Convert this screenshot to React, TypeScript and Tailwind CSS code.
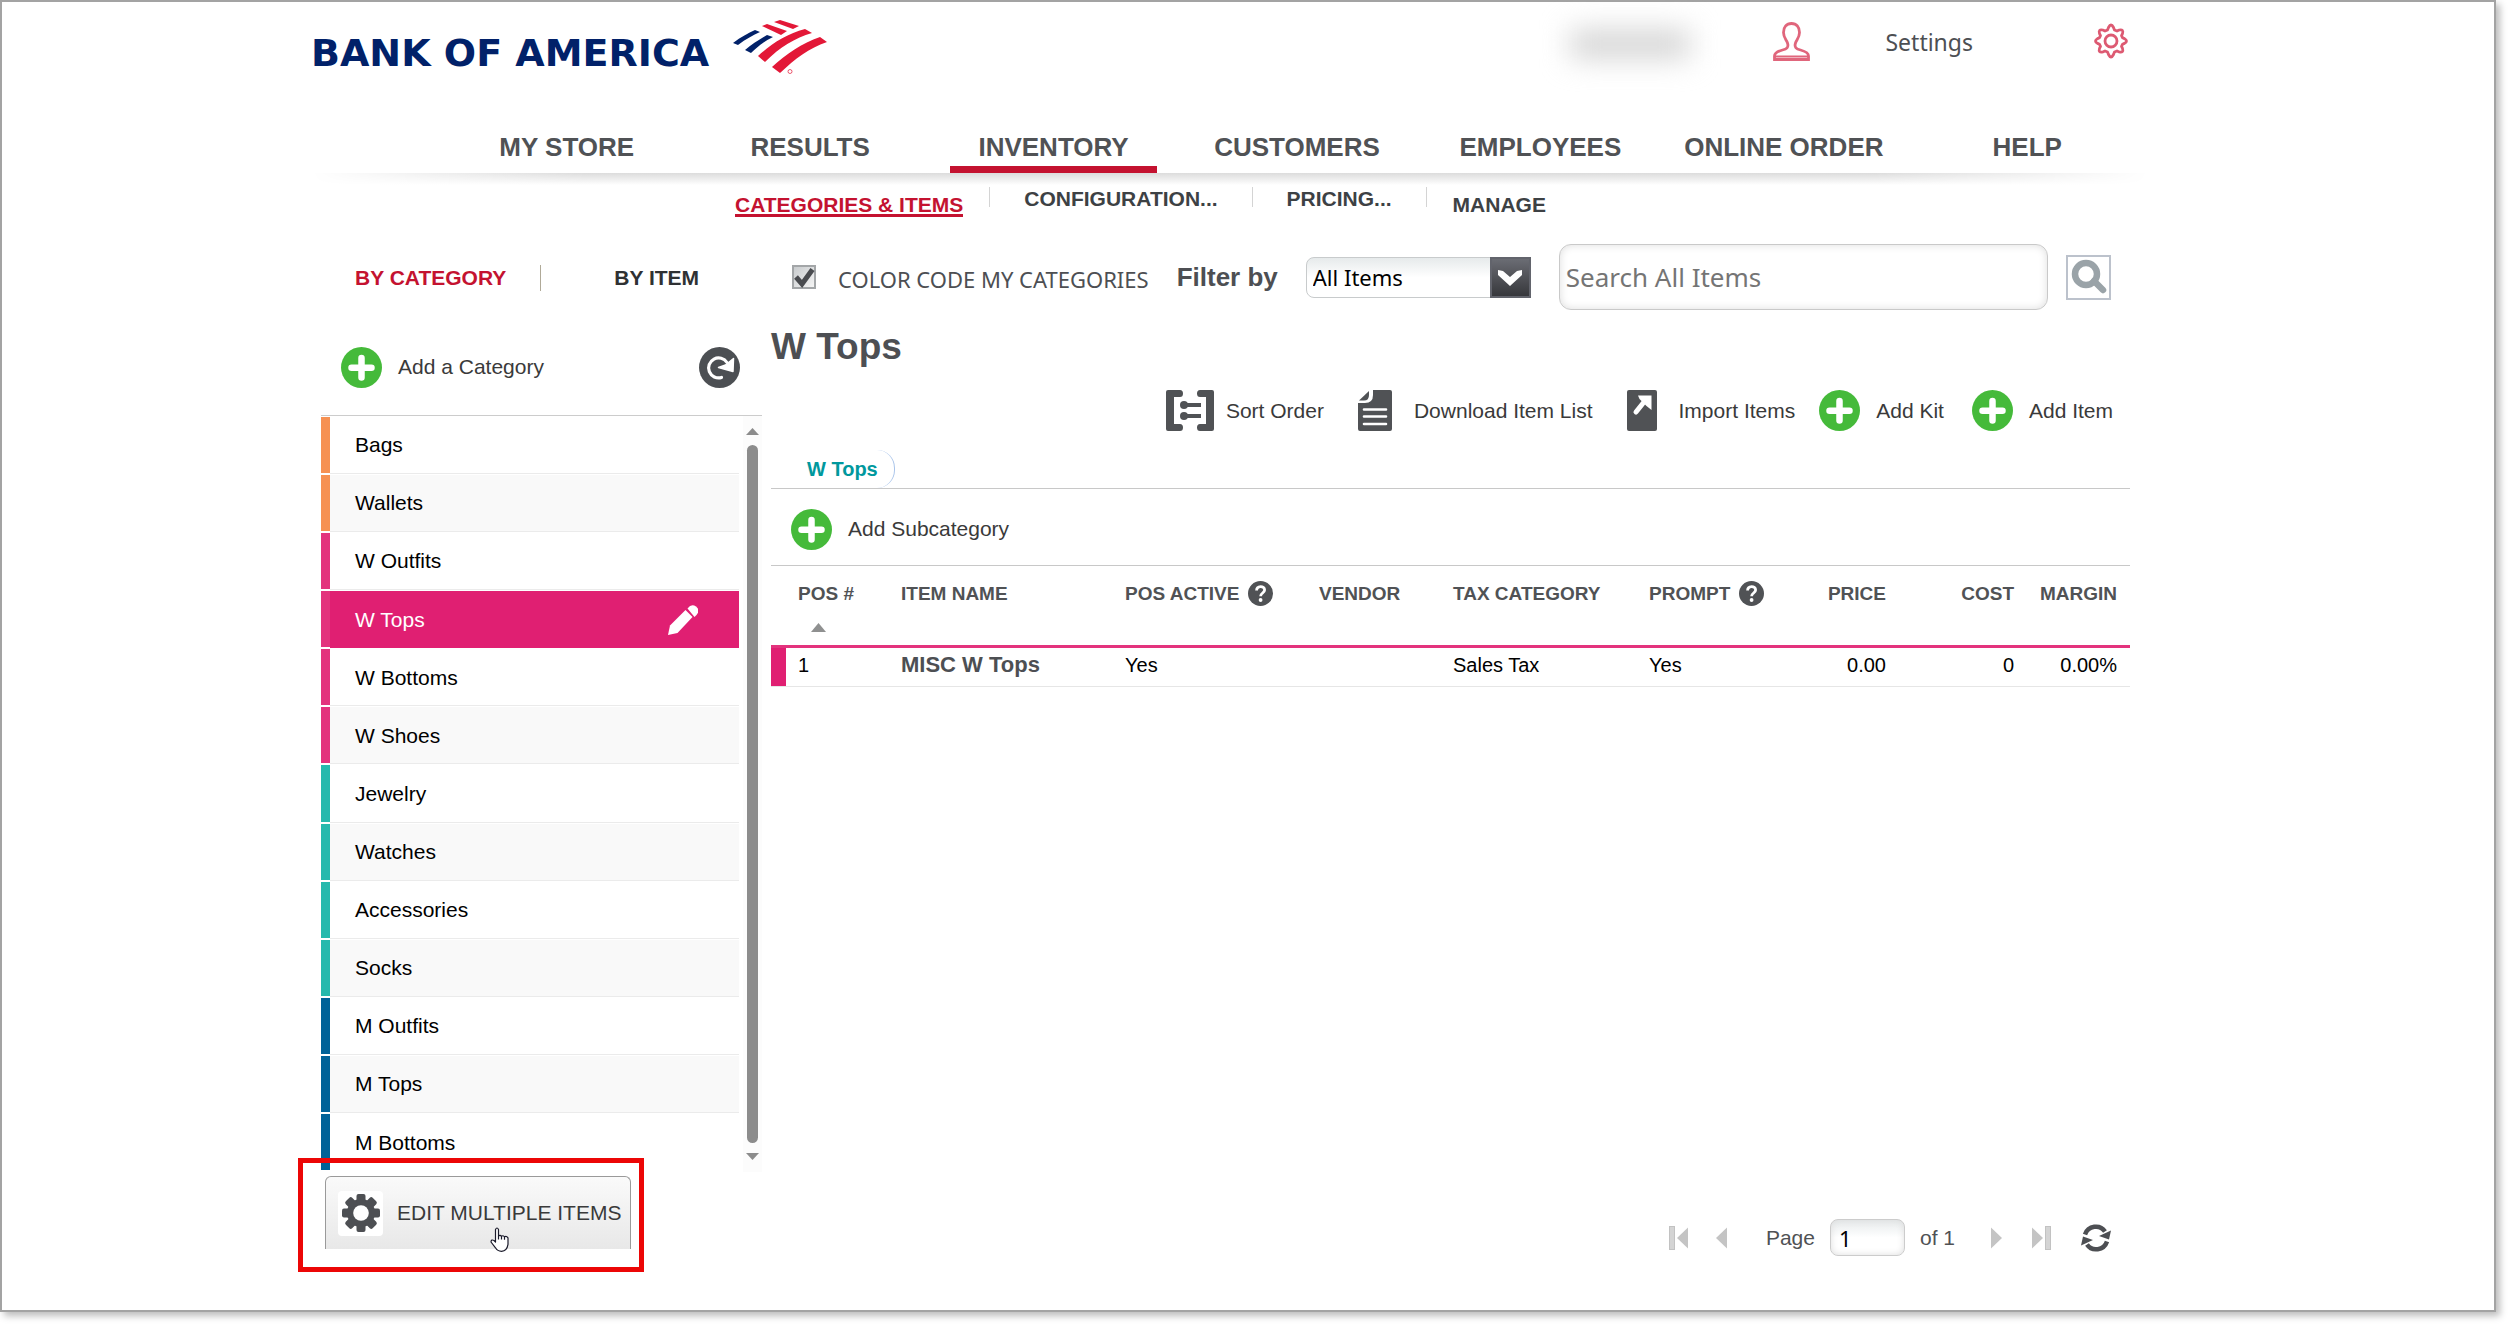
import React, { useState } from 'react';

interface Category {
    name: string;
    bar: string;
}

const categories: Category[] = [
    { name: 'Bags', bar: 'bg-[#f69153]' },
    { name: 'Wallets', bar: 'bg-[#f69153]' },
    { name: 'W Outfits', bar: 'bg-[#e3337d]' },
    { name: 'W Tops', bar: 'bg-[#e3337d]' },
    { name: 'W Bottoms', bar: 'bg-[#e3337d]' },
    { name: 'W Shoes', bar: 'bg-[#e3337d]' },
    { name: 'Jewelry', bar: 'bg-[#26b9ad]' },
    { name: 'Watches', bar: 'bg-[#26b9ad]' },
    { name: 'Accessories', bar: 'bg-[#26b9ad]' },
    { name: 'Socks', bar: 'bg-[#26b9ad]' },
    { name: 'M Outfits', bar: 'bg-[#006298]' },
    { name: 'M Tops', bar: 'bg-[#006298]' },
    { name: 'M Bottoms', bar: 'bg-[#006298]' },
];

const navItems = ['MY STORE', 'RESULTS', 'INVENTORY', 'CUSTOMERS', 'EMPLOYEES', 'ONLINE ORDER', 'HELP'];

const PlusIcon = () => (
    <svg className="w-[41px] h-[41px] shrink-0" viewBox="0 0 41 41">
        <circle cx="20.5" cy="20.5" r="20.5" fill="#45ba3a" />
        <path d="M20.5 11v19.5M10.5 20.7h20" stroke="#fff" strokeWidth="6.5" strokeLinecap="round" />
    </svg>
);

const HelpIcon = () => (
    <svg className="w-[25px] h-[25px] shrink-0" viewBox="0 0 25 25">
        <circle cx="12.5" cy="12.5" r="12.5" fill="#505255" />
        <path d="M8.6 9.6c0-5.4 8-5.2 8-.6 0 3-4 3-4 6.200" fill="none" stroke="#fff" strokeWidth="2.800" />
        <circle cx="12.600" cy="19" r="1.900" fill="#fff" />
    </svg>
);

const LogoMark = () => (
    <svg className="w-[94px] h-[54px]" viewBox="0 0 94 54">
        <g fill="#012169">
            <path d="M0 23C8 17 15 13 22 10l5 2C20 15 13 19 5 25z" />
            <path d="M12 30c7-6 15-11 22-15l6 2c-8 4-15 9-22 16z" />
        </g>
        <g fill="#e31837">
            <path d="M25 36C39 23 54 14 72 9l7 4C62 18 47 27 32 42z" />
            <path d="M39 47C53 34 69 23 87 17l7 5C76 28 62 39 47 53z" />
            <path d="M29 6l5-2 20 7-6 4z" />
            <path d="M41 2l6-2 19 6-6 3z" />
        </g>
        <circle cx="57" cy="51.500" r="2" fill="none" stroke="#e31837" strokeWidth=".7" />
    </svg>
);

const UserIcon = () => (
    <svg className="w-[37px] h-[39px]" viewBox="0 0 37 39" fill="none" stroke="#e0667c" strokeWidth="2.800">
        <path d="M18.500 1.500c-5 0-8 3.500-8 9 0 5 3 7.500 4 10.500 1.500 4.500-1 6-5 7C4 29.500 1.500 31 1.500 34v3.500h34V34c0-3-2.500-4.500-8-6-4-1-6.500-2.500-5-7 1-3 4-5.500 4-10.500 0-5.500-3-9-8-9z" />
        <path d="M2 34.500h33" strokeWidth="2" />
    </svg>
);

const GearOutline = () => (
    <svg className="w-[36px] h-[36px]" viewBox="0 0 36 36" fill="none" stroke="#dd5a72" strokeWidth="2.800" strokeLinejoin="round">
        <path d="M15.500 4.500q2.500-5 5 0l1 2.500 2.500 1 2.200-1q4.700-1 3.300 3.700l-1 2 1 2 2 .9q4 2.400 0 4.800l-2 .9-1 2 1 2q1.400 4.700-3.300 3.700l-2.200-1-2.500 1-1 2.500q-2.500 5-5 0l-1-2.500-2.500-1-2.200 1q-4.700 1-3.300-3.700l1-2-1-2-2-.9q-4-2.400 0-4.800l2-.9 1-2-1-2q-1.400-4.700 3.300-3.700l2.200 1 2.500-1z" />
        <circle cx="18" cy="18" r="6" />
    </svg>
);

const GearSolid = () => (
    <svg className="w-[38px] h-[38px]" viewBox="0 0 38 38">
        <g fill="#4d4f53">
            <circle cx="19" cy="19" r="14" />
            <rect x="14.500" y="0" width="9" height="38" rx="2" />
            <rect x="14.500" y="0" width="9" height="38" rx="2" transform="rotate(45 19 19)" />
            <rect x="14.500" y="0" width="9" height="38" rx="2" transform="rotate(90 19 19)" />
            <rect x="14.500" y="0" width="9" height="38" rx="2" transform="rotate(135 19 19)" />
        </g>
        <circle cx="19" cy="19" r="7.800" fill="#fff" />
    </svg>
);

const RefreshDot = () => (
    <svg className="w-[41px] h-[41px]" viewBox="0 0 41 41">
        <circle cx="20.500" cy="20.500" r="20.500" fill="#4c4f53" />
        <path d="M22.500 30.500a10 10 0 1 1 5.500-15" fill="none" stroke="#fff" strokeWidth="3.200" strokeLinecap="round" />
        <path d="M34.500 11.500l-.5 13-14.500-4 7-2.500z" fill="#fff" stroke="#fff" strokeWidth="1.500" strokeLinejoin="round" />
    </svg>
);

const SortIcon = () => (
    <svg className="w-[48px] h-[41px]" viewBox="0 0 48 41">
        <path d="M2 0h12q3 0 3 3.500T14 7H8v27h6q3 0 3 3.500T14 41H2q-2 0-2-2V2q0-2 2-2zM46 0H34q-3 0-3 3.500T34 7h6v27h-6q-3 0-3 3.500t3 3.500h12q2 0 2-2V2q0-2-2-2z" fill="#505255" />
        <path d="M17 15h18M17 26h18" stroke="#505255" strokeWidth="4" />
        <circle cx="18" cy="15" r="4" fill="#505255" />
        <circle cx="18" cy="26" r="4" fill="#505255" />
    </svg>
);

const DocIcon = () => (
    <svg className="w-[34px] h-[41px]" viewBox="0 0 34 41">
        <path d="M15 0h17q2 0 2 2v37q0 2-2 2H2q-2 0-2-2V13h7q8 0 8-8z" fill="#505255" />
        <path d="M1 10.500L11 1v4q0 5.500-5 5.500z" fill="#505255" />
        <path d="M6 19.500h22M6 26.500h22M6 34h22" stroke="#fff" strokeWidth="2.600" strokeLinecap="round" />
    </svg>
);

const ImportIcon = () => (
    <svg className="w-[30px] h-[41px]" viewBox="0 0 30 41">
        <rect width="30" height="41" rx="2" fill="#505255" />
        <path d="M9 22l8-10" stroke="#fff" strokeWidth="5" strokeLinecap="round" />
        <path d="M11 5.500h13.500V20l-5-4-7-7z" fill="#fff" />
    </svg>
);

const PencilIcon = () => (
    <svg className="w-[30px] h-[30px]" viewBox="0 0 30 30" fill="#fff">
        <path d="M0 30l2-9.500L17.500 5l7 7L9.500 28z" />
        <path d="M19.500 3.500q4-5.500 8.500-2t.5 8.500l-2 2z" />
    </svg>
);

const SearchIcon = () => (
    <svg className="w-[36px] h-[36px]" viewBox="0 0 36 36" fill="none" stroke="#9aa3a8">
        <circle cx="15" cy="15" r="11" strokeWidth="6.500" />
        <path d="M23 22l9 9" strokeWidth="6.500" strokeLinecap="round" />
    </svg>
);

const ReloadIcon = () => (
    <svg className="w-[30px] h-[28px]" viewBox="0 0 30 28">
        <path d="M4 10.500C7 1.500 19 0 24 7.500M26 17.500C23 26.500 11 28 6 20.500" fill="none" stroke="#4d4f53" strokeWidth="4.500" />
        <path d="M30 6.500l-2 9-10-3.500zM0 21.500l2-9 10 3.500z" fill="#4d4f53" />
    </svg>
);

const ArrowIcon = ({ bar, flip }: { bar?: boolean; flip?: boolean }) => (
    <svg className={`h-[24px] ${bar ? 'w-[20px]' : 'w-[12px]'} ${flip ? 'rotate-180' : ''}`} viewBox={bar ? '0 0 20 24' : '8 0 12 24'}>
        <path d="M19 1.500v21L8 12z" fill="#c4c4c4" />
        {bar && <rect x=".5" y=".5" width="5" height="23" fill="#d4d4d4" stroke="#c2c2c2" />}
    </svg>
);

const HandCursor = () => (
    <svg className="w-[19px] h-[25px]" viewBox="0 0 19 25" fill="#fff" stroke="#1a1a2a" strokeWidth="1.200" strokeLinejoin="round">
        <path d="M5.500 15V2.500q1.500-3 3 0V9q1.500-1.500 3 .3 1.500-1.300 3 .5 2-1 3.500 1v6.500q-1 6.500-6.500 7-4 0-6-3.500L1 15q0-3 3-1.500z" />
        <path d="M8.500 9v3.500M11.500 9.300v3.200M14.500 9.800v3" fill="none" />
    </svg>
);

const ToolButton = ({ icon, label, className = '' }: { icon: React.ReactNode; label: string; className?: string }) => (
    <button className={`flex items-center text-[21px] text-[#3a3a3a] ${className}`}>
        {icon}
        <span className="whitespace-nowrap">{label}</span>
    </button>
);

const Header = () => (
    <header>
        <div className="flex justify-between h-[112px] pr-5">
            <a href="#" aria-label="Bank of America" className="flex gap-6 pt-[18px]">
                <span className="pt-3 flex items-start h-[54px] text-[38px] leading-[42px] font-bold font-['DejaVu_Sans'] text-[#012169] whitespace-nowrap">
                    BANK OF AMERICA
                </span>
                <LogoMark />
            </a>
            <div className="flex items-start pt-5">
                <div className="w-[158px] h-[44px] mr-16 flex items-center justify-center">
                    <div className="w-[120px] h-[30px] bg-[#d6d6d6] blur-[14px]" />
                </div>
                <UserIcon />
                <a href="#" className="ml-[75px] mr-[120px] leading-[40px] text-[23px] font-['Noto_Sans'] text-[#4d4f53]">Settings</a>
                <button aria-label="Settings menu" className="pt-px"><GearOutline /></button>
            </div>
        </div>
        <nav>
            <ul className="flex pl-[134px]">
                {navItems.map(item => (
                    <li key={item} className="flex-1 min-w-0 flex justify-center">
                        <a
                            href="#"
                            className={`h-[59px] px-7 pt-[18px] text-[26px] leading-[30px] font-bold text-[#505255] whitespace-nowrap border-b-[7px] ${item === 'INVENTORY' ? 'border-[#c41230]' : 'border-transparent'}`}
                        >
                            {item}
                        </a>
                    </li>
                ))}
            </ul>
            <div className="h-3 bg-linear-to-b from-[#dcdcdc] to-white mask-x-from-85%" />
            <ul className="flex h-[52px] pl-[424px] pt-[2px] text-[21px] leading-[24px] font-bold text-[#3d4144]">
                <li className="pt-[6px] pr-[26px]">
                    <a href="#" className="block border-b-[3px] border-[#c41230] text-[#c41230] h-[24px]">CATEGORIES &amp; ITEMS</a>
                </li>
                <li className="px-[34px] h-5 border-l border-[#d4d4d4]"><a href="#">CONFIGURATION...</a></li>
                <li className="px-[34px] h-5 border-l border-[#d4d4d4]"><a href="#">PRICING...</a></li>
                <li className="px-[26px] h-5 border-l border-[#d4d4d4] pt-[6px]"><a href="#">MANAGE</a></li>
            </ul>
        </nav>
    </header>
);

const Sidebar = () => {
    const [selected, setSelected] = useState('W Tops');

    return (
        <aside className="w-[441px] shrink-0 pb-[23px]">
            <div className="flex items-center h-[82px] pl-[34px] text-[21px] font-bold">
                <button className="text-[#c41230]">BY CATEGORY</button>
                <span className="w-px h-[26px] bg-[#b0aa98] ml-[34px] mr-[73px]" />
                <button className="text-[#2f3133]">BY ITEM</button>
            </div>
            <div className="flex items-center justify-between h-24 pl-5 pr-[22px]">
                <ToolButton icon={<PlusIcon />} label="Add a Category" className="gap-4" />
                <button aria-label="Refresh categories"><RefreshDot /></button>
            </div>
            <div className="flex justify-between h-[757px] border-t border-[#cccccc]">
                <ul className="flex flex-col w-[418px] pt-px">
                    {categories.map((category, i) => {
                        const active = category.name === selected;
                        return (
                            <li key={category.name} className="flex flex-1 pb-px">
                                <span className={`w-[9px] mb-px ${category.bar}`} />
                                <div
                                    className={`flex flex-1 items-center justify-between pr-[41px] ${active
                                        ? 'bg-[#e01f72] text-white'
                                        : i === categories.length - 1
                                            ? 'text-black'
                                            : i % 2
                                                ? 'bg-[#f9f9f9] text-black border-b border-[#ebebeb]'
                                                : 'bg-white text-black border-b border-[#ebebeb]'
                                        }`}
                                >
                                    <button onClick={() => setSelected(category.name)} className="flex-1 pl-[25px] text-left text-[21px]">
                                        {category.name}
                                    </button>
                                    {active && <button aria-label={`Edit ${category.name}`}><PencilIcon /></button>}
                                </div>
                            </li>
                        );
                    })}
                </ul>
                {/* Scroll track */}
                <div className="flex flex-col items-center w-[19px] bg-[#fcfcfc] pt-3 pb-3">
                    <svg className="w-[13px] h-[7px] shrink-0" viewBox="0 0 13 7"><path d="M6.500 0L13 7H0z" fill="#8c8c8c" /></svg>
                    <div className="w-[11px] flex-1 my-[10px] rounded-full bg-[#8c8c8c]" />
                    <svg className="w-[13px] h-[7px] shrink-0" viewBox="0 0 13 7"><path d="M6.500 7L13 0H0z" fill="#8c8c8c" /></svg>
                </div>
            </div>
            <div className="relative pl-1 pt-1">
                <button className="flex items-center gap-[14px] w-[306px] h-[73px] pl-3 rounded-t-md border border-b-0 border-[#9a9a9a] bg-linear-to-b from-[#fafafa] to-[#e8e8e8] text-[21px] text-[#3a3a3a] whitespace-nowrap">
                    <span className="flex items-center justify-center w-[45px] h-[45px] rounded-sm bg-white"><GearSolid /></span>
                    EDIT MULTIPLE ITEMS
                </button>
                {/* Highlight box and pointer */}
                <div className="absolute -left-[23px] -top-[14px] w-[346px] h-[114px] border-5 border-[#ec0606] pointer-events-none" />
                <div className="absolute left-[169px] top-[55px] pointer-events-none"><HandCursor /></div>
            </div>
        </aside>
    );
};

const FilterBar = () => {
    const [colorCode, setColorCode] = useState(true);

    return (
        <div className="flex items-center h-20 pl-[21px] pr-[19px] text-[#4d4f53]">
            <label className="relative flex items-center gap-[22px] text-[22px] leading-[30px] font-['Noto_Sans'] whitespace-nowrap">
                <input
                    type="checkbox"
                    checked={colorCode}
                    onChange={e => setColorCode(e.target.checked)}
                    className="appearance-none w-[24px] h-[24px] border-2 border-[#a3a6a8] bg-linear-to-br from-[#c9ccce] to-[#f4f4f4]"
                />
                {colorCode && (
                    <svg className="absolute left-0 w-[24px] h-[24px] pointer-events-none" viewBox="0 0 24 24" fill="none" stroke="#4a4c50" strokeWidth="5">
                        <path d="M4 12l6 7L20.500 4.500" />
                    </svg>
                )}
                <span className="pt-1">COLOR CODE MY CATEGORIES</span>
            </label>
            <label htmlFor="item-filter" className="ml-[28px] text-[26px] font-bold whitespace-nowrap">Filter by</label>
            <div className="relative ml-7 w-[225px] h-[41px]">
                <select
                    id="item-filter"
                    className="appearance-none w-full h-full pl-[6px] rounded-lg border border-[#c8cbcc] bg-linear-to-b from-[#e6eaeb] to-white to-50% text-[22px] text-black font-['Noto_Sans']"
                >
                    <option>All Items</option>
                </select>
                <span className="absolute right-0 top-0 flex items-center justify-center w-[41px] h-[41px] border-2 border-[#62646c] bg-linear-to-b from-[#6b6d74] to-[#37383c] pointer-events-none">
                    <svg className="w-[24px] h-[17px]" viewBox="0 0 24 17"><path d="M0 1l5 1 7 6 7-6 5-1v5L12 17 0 6z" fill="#fff" /></svg>
                </span>
            </div>
            <input
                type="search"
                aria-label="Search All Items"
                placeholder="Search All Items"
                className="flex-1 min-w-0 h-[66px] ml-7 mr-[18px] px-[6px] rounded-xl border border-[#c9c9c9] shadow-[inset_0_0_9px_#dddddd] text-[26px] font-['Noto_Sans'] placeholder:text-[#757575]"
            />
            <button aria-label="Search" className="flex items-center justify-center w-[45px] h-[45px] border-2 border-[#bcc2cc] bg-white">
                <SearchIcon />
            </button>
        </div>
    );
};

const ItemTable = () => (
    <table className="w-full table-fixed text-[20px] text-black">
        <colgroup>
            <col className="w-[117px]" />
            <col className="w-[224px]" />
            <col className="w-[194px]" />
            <col className="w-[134px]" />
            <col className="w-[196px]" />
            <col className="w-[134px]" />
            <col className="w-[129px]" />
            <col className="w-[128px]" />
            <col className="w-[103px]" />
        </colgroup>
        <thead className="text-[19px] leading-[25px] text-[#505255] text-left whitespace-nowrap">
            <tr className="h-[80px] align-top border-b-[3px] border-[#e3337d] *:pt-[15px] *:px-[13px]">
                <th>
                    <div className="flex flex-col pl-[14px]">
                        POS #
                        <svg className="w-[15px] h-[9px] ml-[13px] mt-[17px]" viewBox="0 0 15 9"><path d="M7.500 0L15 9H0z" fill="#8f9090" /></svg>
                    </div>
                </th>
                <th>ITEM NAME</th>
                <th><span className="flex gap-[9px]">POS ACTIVE <HelpIcon /></span></th>
                <th>VENDOR</th>
                <th>TAX CATEGORY</th>
                <th><span className="flex gap-[9px]">PROMPT <HelpIcon /></span></th>
                <th className="text-right">PRICE</th>
                <th className="text-right">COST</th>
                <th className="text-right">MARGIN</th>
            </tr>
        </thead>
        <tbody>
            <tr className="h-[40px] border-b border-[#e6e6e6] leading-[24px] *:px-[13px] *:pt-0 *:pb-1">
                <td className="relative">
                    <span className="absolute left-0 top-0 w-[15px] h-full bg-[#e01f72]" />
                    <span className="pl-[14px]">1</span>
                </td>
                <td className="text-[22px] font-bold text-[#4d4f53]">MISC W Tops</td>
                <td>Yes</td>
                <td />
                <td>Sales Tax</td>
                <td>Yes</td>
                <td className="text-right">0.00</td>
                <td className="text-right">0</td>
                <td className="text-right">0.00%</td>
            </tr>
        </tbody>
    </table>
);

const Pagination = () => (
    <div className="flex items-center justify-end h-[37px] mt-auto mb-4 pr-[19px] text-[21px] text-[#505255]">
        <button aria-label="First page" className="mr-[27px]"><ArrowIcon bar /></button>
        <button aria-label="Previous page" className="mr-[38px]"><ArrowIcon /></button>
        <label htmlFor="page" className="mr-[15px]">Page</label>
        <input
            id="page"
            defaultValue="1"
            className="w-[75px] h-[37px] mr-[15px] px-2 rounded-lg border border-[#cccccc] bg-linear-to-b from-[#e6eaeb] to-white to-50% shadow-[inset_0_0_7px_#dddddd] text-[22px] text-black font-['Noto_Sans']"
        />
        <span className="mr-[35px]">of 1</span>
        <button aria-label="Next page" className="mr-[29px]"><ArrowIcon flip /></button>
        <button aria-label="Last page" className="mr-[30px]"><ArrowIcon bar flip /></button>
        <button aria-label="Reload items"><ReloadIcon /></button>
    </div>
);

export default function App() {
    return (
        <div className="pr-[15px] pb-[15px] bg-white font-['Liberation_Sans',Arial,sans-serif]">
            <div className="border-2 border-[#a3a3a3] shadow-[4px_4px_7px_#bdbdbd] flex justify-center pr-9 pb-[38px]">
                <div className="w-full max-w-[1838px]">
                    <Header />
                    <div className="flex gap-[9px] pl-[10px] pr-[19px]">
                        <Sidebar />
                        <main className="flex flex-col flex-1 min-w-0">
                            <FilterBar />
                            <h1 className="h-[60px] leading-[60px] text-[37px] font-bold text-[#4d4f53]">W Tops</h1>
                            <div className="flex items-center justify-end h-[67px] pr-[17px]">
                                <ToolButton icon={<SortIcon />} label="Sort Order" className="gap-[12px] mr-[34px]" />
                                <ToolButton icon={<DocIcon />} label="Download Item List" className="gap-[22px] mr-[34px]" />
                                <ToolButton icon={<ImportIcon />} label="Import Items" className="gap-[22px] mr-6" />
                                <ToolButton icon={<PlusIcon />} label="Add Kit" className="gap-4 mr-7" />
                                <ToolButton icon={<PlusIcon />} label="Add Item" className="gap-4" />
                            </div>
                            <div className="flex h-[45px] pt-[6px] pl-9 border-b border-[#c8c8c8]">
                                <a href="#" className="h-[38px] pr-[16px] leading-[38px] rounded-r-[18px] border-r border-[#a9c4ea] text-[20px] font-bold text-[#00989d]">W Tops</a>
                            </div>
                            <div className="flex items-center h-[77px] pt-1 pl-5 border-b border-[#c8c8c8]">
                                <ToolButton icon={<PlusIcon />} label="Add Subcategory" className="gap-4" />
                            </div>
                            <ItemTable />
                            <Pagination />
                        </main>
                    </div>
                </div>
            </div>
        </div>
    );
}
